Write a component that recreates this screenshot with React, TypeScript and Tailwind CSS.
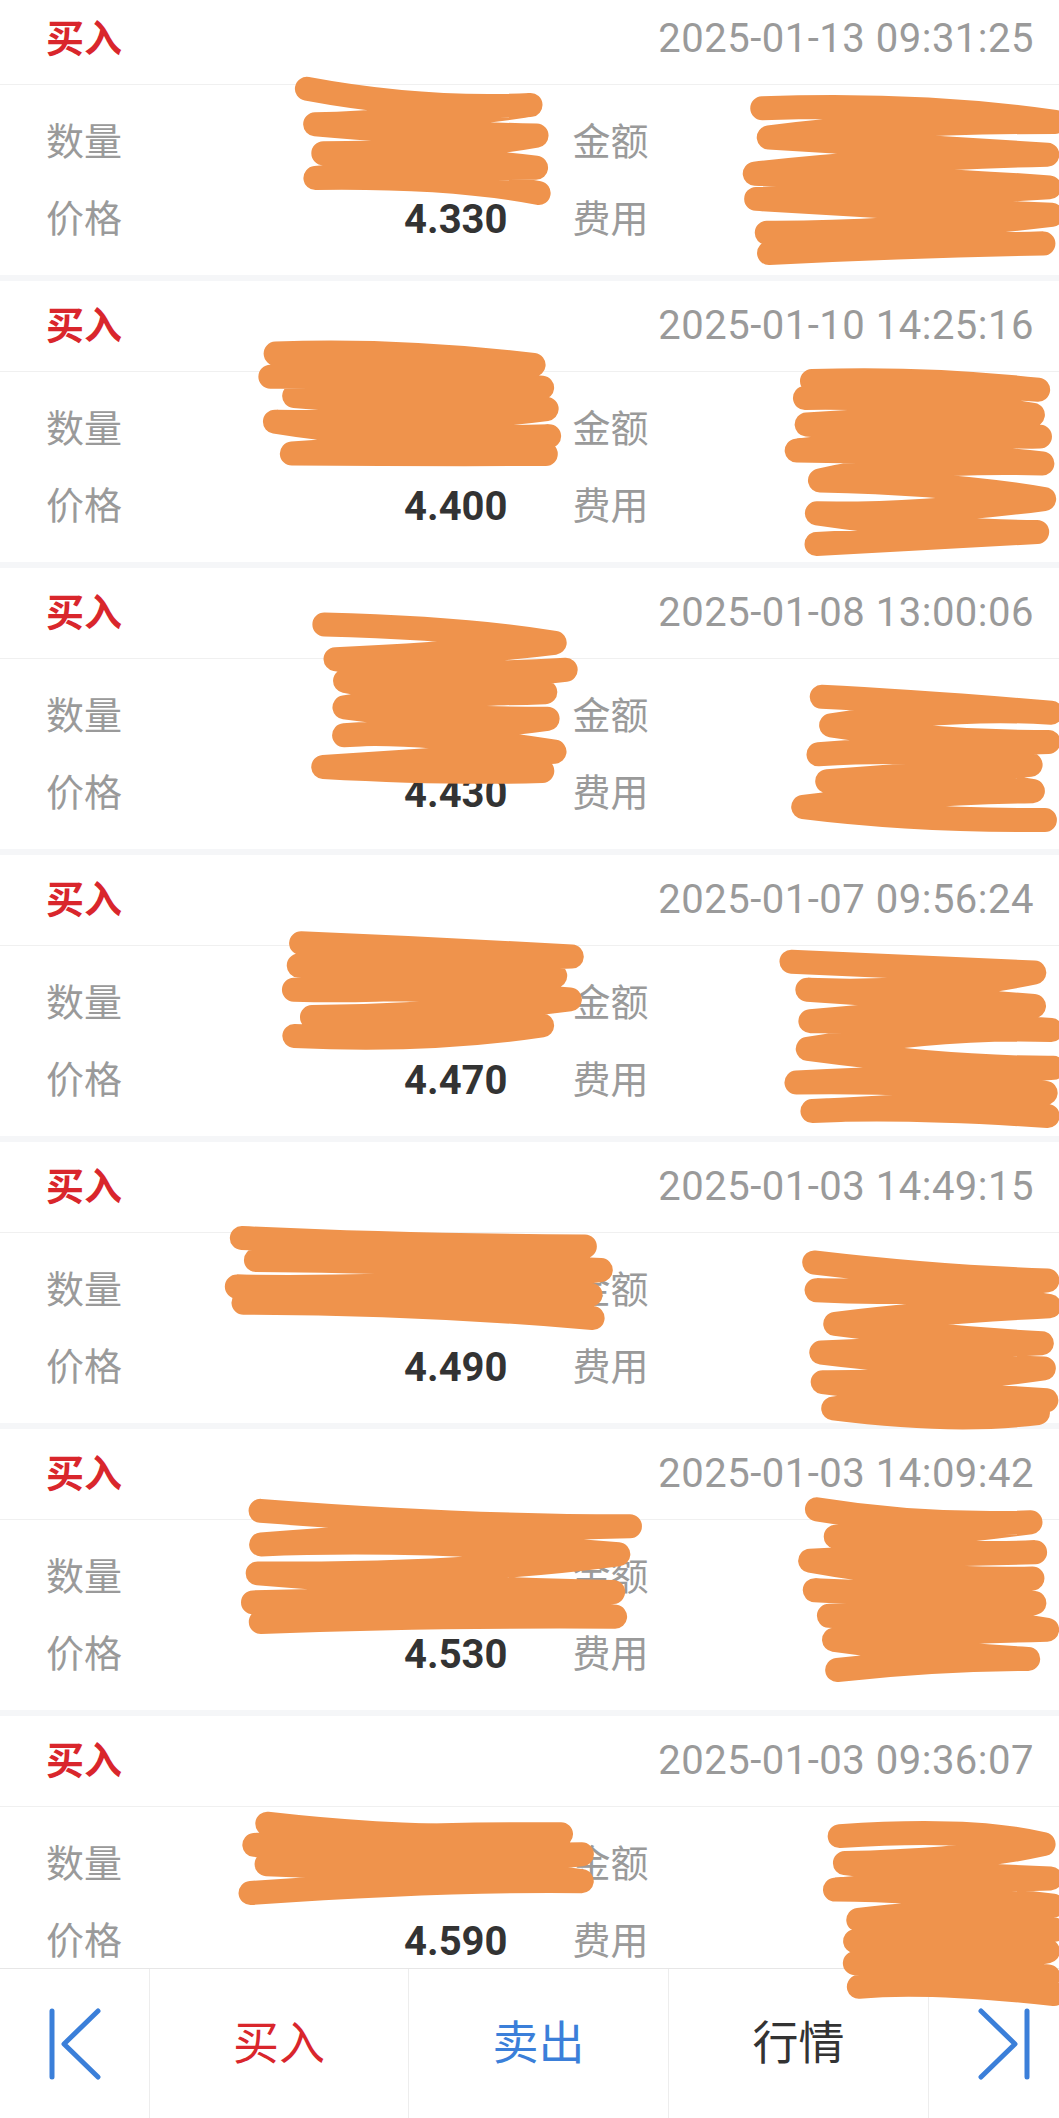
import React from "react";

const trades = [
  { time: "2025-01-13 09:31:25", price: "4.330" },
  { time: "2025-01-10 14:25:16", price: "4.400" },
  { time: "2025-01-08 13:00:06", price: "4.430" },
  { time: "2025-01-07 09:56:24", price: "4.470" },
  { time: "2025-01-03 14:49:15", price: "4.490" },
  { time: "2025-01-03 14:09:42", price: "4.530" },
  { time: "2025-01-03 09:36:07", price: "4.590" },
];

// redaction scribbles, page coords [x0, y0, x1, y1]
const blobs: number[][] = [
  [292, 74, 552, 205],
  [736, 95, 1070, 265],
  [258, 336, 572, 466],
  [783, 365, 1070, 556],
  [304, 610, 580, 783],
  [790, 684, 1070, 832],
  [278, 926, 584, 1048],
  [777, 946, 1070, 1128],
  [216, 1224, 614, 1330],
  [797, 1250, 1070, 1425],
  [232, 1494, 646, 1634],
  [797, 1494, 1070, 1682],
  [236, 1810, 594, 1905],
  [817, 1824, 1070, 2006],
];

function scribble(x0: number, y0: number, x1: number, y1: number, seed: number) {
  let s = seed * 7919 + 13;
  const r = () => {
    s = (s * 9301 + 49297) % 233280;
    return s / 233280;
  };
  const pad = 12;
  let y = y0 + pad + r() * 6;
  let left = true;
  let d = `M ${x0 + pad + r() * 20} ${y}`;
  while (y < y1 - pad) {
    const ny = Math.min(y1 - pad, y + 8 + r() * 12);
    const xEnd = left ? x1 - pad - r() * 30 : x0 + pad + r() * 30;
    const cx = (x0 + x1) / 2 + (r() - 0.5) * 60;
    const cy = (y + ny) / 2 + (r() - 0.5) * 28;
    d += ` Q ${cx} ${cy} ${xEnd} ${ny}`;
    y = ny;
    left = !left;
  }
  return d;
}

const Row = ({ label, value }: { label: string; value?: string }) => (
  <div className="flex h-[77px] items-center justify-between">
    <span className="text-[38px] text-[#9a9a9a]">{label}</span>
    {value && <span className="text-[40px] font-bold text-[#333]">{value}</span>}
  </div>
);

const TradeCard = ({ time, price }: { time: string; price: string }) => (
  <div className="bg-white">
    <div className="flex h-[91px] items-center justify-between border-b border-[#f0f0f0] pl-[46px] pr-[25px]">
      <span className="text-[38px] font-bold text-[#d9262c]">买入</span>
      <span className="text-[40px] tracking-[0.5px] text-[#9a9a9a]">{time}</span>
    </div>
    <div className="grid grid-cols-2 gap-x-[65px] pl-[46px] pr-[25px] pt-[19px] pb-[17px]">
      <Row label="数量" />
      <Row label="金额" />
      <Row label="价格" value={price} />
      <Row label="费用" />
    </div>
  </div>
);

const FirstIcon = () => (
  <svg width="52" height="72" viewBox="0 0 52 72" fill="none" stroke="#3b7fd9" strokeWidth="5" strokeLinecap="round" strokeLinejoin="round">
    <line x1="3" y1="3" x2="3" y2="69" />
    <polyline points="49,3 15,36 49,69" />
  </svg>
);

const LastIcon = () => (
  <svg width="52" height="72" viewBox="0 0 52 72" fill="none" stroke="#3b7fd9" strokeWidth="5" strokeLinecap="round" strokeLinejoin="round">
    <line x1="49" y1="3" x2="49" y2="69" />
    <polyline points="3,3 37,36 3,69" />
  </svg>
);

export default function App() {
  return (
    <div className="relative flex h-[2118px] w-[1059px] flex-col overflow-hidden bg-white font-['Roboto','Noto_Sans_CJK_SC',sans-serif]">
      <div className="min-h-0 flex-1 overflow-hidden bg-[#f5f6f8]">
        <div className="-mt-[6px] flex flex-col gap-[6px]">
          {trades.map((t) => (
            <TradeCard key={t.time} time={t.time} price={t.price} />
          ))}
        </div>
      </div>

      {/* bottom toolbar */}
      <div className="flex h-[150px] shrink-0 overflow-hidden border-t border-[#e6e6e6] bg-white">
        <div className="flex w-[150px] shrink-0 items-center justify-center border-r border-[#ededed]">
          <FirstIcon />
        </div>
        <div className="flex w-[259px] shrink-0 items-center justify-center border-r border-[#ededed] text-[46px] text-[#d9262c]">
          买入
        </div>
        <div className="flex w-[260px] shrink-0 items-center justify-center border-r border-[#ededed] text-[46px] text-[#3b7fd9]">
          卖出
        </div>
        <div className="flex w-[260px] shrink-0 items-center justify-center border-r border-[#ededed] text-[46px] text-[#333]">
          行情
        </div>
        <div className="flex w-[150px] shrink-0 items-center justify-center">
          <LastIcon />
        </div>
      </div>

      <svg
        className="pointer-events-none absolute left-0 top-0"
        width="1059"
        height="2118"
        viewBox="0 0 1059 2118"
        fill="none"
        stroke="#ef934c"
        strokeWidth="24"
        strokeLinecap="round"
        strokeLinejoin="round"
      >
        {blobs.map((b, i) => (
          <path key={i} d={scribble(b[0], b[1], b[2], b[3], i + 1)} />
        ))}
      </svg>
    </div>
  );
}
